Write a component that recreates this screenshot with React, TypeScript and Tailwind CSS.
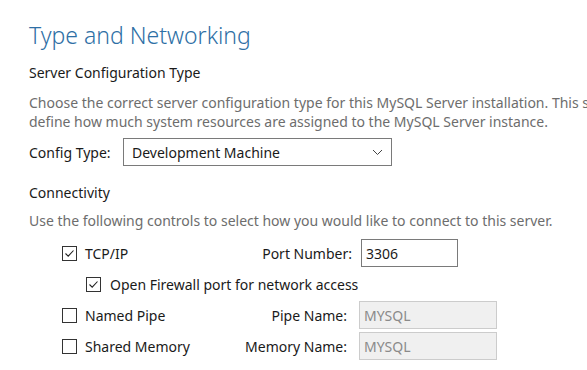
import React from "react";

const Check = ({ checked }: { checked: boolean }) => (
  <span className="w-[15px] h-[15px] border border-[#333] bg-white flex items-center justify-center shrink-0">
    {checked && (
      <svg width="11" height="11" viewBox="0 0 11 11">
        <path d="M1.5 5.5 L4.2 8.2 L9.5 2.5" fill="none" stroke="#222" strokeWidth="1.1" />
      </svg>
    )}
  </span>
);

const App = () => {
  return (
    <div className="w-[587px] h-[370px] bg-white overflow-hidden pl-[29px] pt-[20px] text-[14px] text-[#1a1a1a] whitespace-nowrap" style={{ fontFamily: '"Noto Sans", sans-serif' }}>
      <h1 className="text-[23px] font-light leading-[30px] text-[#2e6fa5]">Type and Networking</h1>

      <div className="mt-[14px] leading-[18px]">Server Configuration Type</div>
      <div className="mt-[11px] leading-[19px] text-[#6d6d6d]">
        <div>Choose the correct server configuration type for this MySQL Server installation. This setting will</div>
        <div>define how much system resources are assigned to the MySQL Server instance.</div>
      </div>

      <div className="mt-[7px] flex items-center h-[28px]">
        <span className="w-[94px]">Config Type:</span>
        <div className="w-[269px] h-[28px] border border-[#7a7a7a] flex items-center justify-between pl-[8px] pr-[8px]">
          <span>Development Machine</span>
          <svg width="11" height="7" viewBox="0 0 11 7">
            <path d="M1 1 L5.5 5.5 L10 1" fill="none" stroke="#444" strokeWidth="1" />
          </svg>
        </div>
      </div>

      <div className="mt-[18px] leading-[18px]">Connectivity</div>
      <div className="mt-[10px] leading-[18px] text-[#6d6d6d]">Use the following controls to select how you would like to connect to this server.</div>

      <div className="mt-[9px] flex items-center h-[28px] pl-[33px]">
        <div className="w-[290px] flex items-center">
          <Check checked />
          <span className="ml-[8px] flex-1">TCP/IP</span>
          <span>Port Number:</span>
        </div>
        <div className="ml-[9px] w-[97px] h-[28px] border border-[#7a7a7a] flex items-center pl-[4px]">3306</div>
      </div>

      <div className="mt-[6px] flex items-center h-[22px] pl-[57px]">
        <Check checked />
        <span className="ml-[9px]">Open Firewall port for network access</span>
      </div>

      <div className="mt-[6px] flex items-center h-[28px] pl-[33px]">
        <div className="w-[285px] flex items-center">
          <Check checked={false} />
          <span className="ml-[8px] flex-1">Named Pipe</span>
          <span>Pipe Name:</span>
        </div>
        <div className="ml-[12px] w-[138px] h-[28px] border border-[#cccccc] bg-[#f0f0f0] text-[#8a8a8a] flex items-center pl-[4px]">MYSQL</div>
      </div>

      <div className="mt-[3px] flex items-center h-[28px] pl-[33px]">
        <div className="w-[285px] flex items-center">
          <Check checked={false} />
          <span className="ml-[8px] flex-1">Shared Memory</span>
          <span>Memory Name:</span>
        </div>
        <div className="ml-[12px] w-[138px] h-[28px] border border-[#cccccc] bg-[#f0f0f0] text-[#8a8a8a] flex items-center pl-[4px]">MYSQL</div>
      </div>
    </div>
  );
};

export default App;
